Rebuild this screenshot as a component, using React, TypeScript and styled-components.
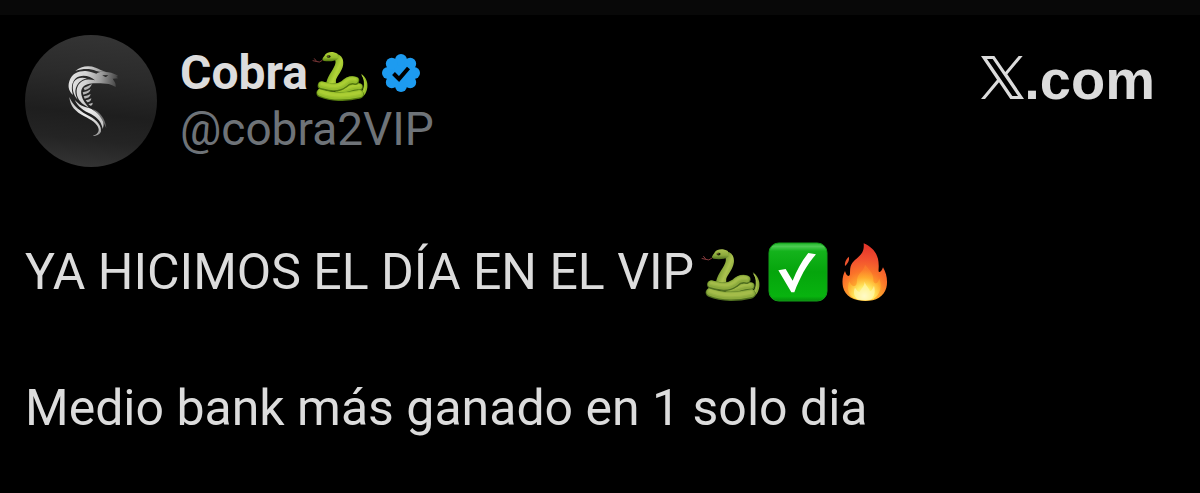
import React, { useId } from 'react';
import styled, { createGlobalStyle } from 'styled-components';

const GlobalStyle = createGlobalStyle`
  body {
    margin: 0;
    background: #000;
    color: #dcdcdc;
    font-family: Roboto, "Liberation Sans", sans-serif;
  }
`;

const TopStrip = styled.div`
  height: 15px;
  background: #080808;
`;

const Post = styled.article`
  padding: 20px 45px 24px 25px;
`;

const Header = styled.header`
  display: flex;
  align-items: flex-start;
`;

const Author = styled.div`
  flex: 1;
  min-width: 0;
  padding: 10px 0 0 23px;
`;

const NameRow = styled.div`
  display: flex;
  align-items: center;
  height: 56px;
`;

const Name = styled.span`
  font-size: 48px;
  line-height: 56px;
  font-weight: 700;
`;

const Handle = styled.a`
  display: block;
  font-size: 46px;
  line-height: 56px;
  color: #6e7378;
  text-decoration: none;
`;

const Brand = styled.a`
  display: flex;
  align-items: baseline;
  margin-top: 14px;
  font-family: "Liberation Sans", Arial, sans-serif;
  font-size: 56px;
  line-height: 62px;
  font-weight: 700;
  color: #dcdcdc;
  text-decoration: none;
`;

const Body = styled.div`
  margin-top: 71px;
`;

const Line = styled.p`
  display: flex;
  align-items: center;
  margin: 0 0 68px;
  font-size: 50px;
  line-height: 68px;

  &:last-child {
    margin-bottom: 0;
  }
`;

const Icon = styled.svg<{ $gap?: number }>`
  flex: none;
  margin-left: ${({ $gap = 0 }) => $gap}px;
`;

const Picture = styled.svg`
  flex: none;
  display: block;
`;

function Avatar() {
  return (
    <Picture width="132" height="132" viewBox="14 14 396 396" role="img" aria-label="Cobra">
      <defs>
        <linearGradient id="disc" x1="0.6" y1="0" x2="0.5" y2="1">
          <stop offset="0" stopColor="#343434" />
          <stop offset="0.3" stopColor="#2b2b2b" />
          <stop offset="0.6" stopColor="#1e1e1e" />
          <stop offset="0.8" stopColor="#242424" />
          <stop offset="1" stopColor="#333" />
        </linearGradient>
        <linearGradient id="steel" gradientUnits="userSpaceOnUse" x1="145" y1="130" x2="296" y2="150">
          <stop offset="0" stopColor="#e4e4e4" />
          <stop offset="0.35" stopColor="#d2d2d2" />
          <stop offset="0.65" stopColor="#9a9a9a" />
          <stop offset="1" stopColor="#3a3a3a" />
        </linearGradient>
        <linearGradient id="tailSteel" gradientUnits="userSpaceOnUse" x1="150" y1="200" x2="250" y2="315">
          <stop offset="0" stopColor="#bdbdbd" />
          <stop offset="0.45" stopColor="#ececec" />
          <stop offset="0.85" stopColor="#c4c4c4" />
          <stop offset="1" stopColor="#555" />
        </linearGradient>
      </defs>
      <circle cx="212" cy="212" r="198" fill="url(#disc)" />
      <g fill="url(#steel)">
        <path d="M165 122C180 108 205 104 226 112C236 116 246 121 258 124C247 125 238 125 228 122C208 114 190 114 165 122Z" />
        <path d="M148 150C154 130 176 121 196 122C210 123 220 128 228 130C238 122 254 124 264 126C276 128 286 132 294 137L288 139L294 144L277 145C280 152 286 156 286 164L286 170C276 164 268 160 258 160C236 160 220 156 202 162C184 168 180 180 184 196C187 210 196 220 206 232C184 222 170 206 169 188C168 172 174 158 188 151C200 145 212 148 224 150C210 136 182 130 165 145C154 156 152 174 158 194C142 180 143 164 148 150Z" />
        <path d="M160 156C168 142 184 140 200 144C182 148 168 160 165 182C165 192 168 200 172 208C158 194 154 172 160 156Z" />
      </g>
      <path d="M246 134Q255 136 264 134L257 140Q250 139 246 134Z" fill="#1d1d1d" />
      <g fill="#b4b4b4">
        <path d="M190 173Q200 169 215 161Q210 175 193 180Z" />
        <path d="M187 186Q199 184 211 177Q208 190 189 193Z" />
        <path d="M190 198Q201 197 211 191Q209 203 193 205Z" />
        <path d="M196 210Q205 209 213 204Q212 215 201 216Z" />
        <path d="M204 221Q211 220 217 217Q217 226 210 226Z" />
      </g>
      <g fill="url(#tailSteel)">
        <path d="M147 200C158 228 182 244 208 258C230 270 244 286 242 304C238 313 228 316 217 317C230 312 236 306 235 296C232 280 212 268 192 258C166 244 149 228 147 200Z" />
        <path d="M163 208C176 224 190 229 206 233C226 240 242 258 249 276C251 286 249 290 247 296C245 278 232 262 212 251C190 241 172 229 163 208Z" />
        <path d="M217 236C238 244 256 266 258 294C248 270 238 254 217 236Z" opacity="0.45" />
      </g>
    </Picture>
  );
}

function Snake({ width, height, bright, gap }: { width: number; height: number; bright?: boolean; gap: number }) {
  const id = useId();
  const light = bright ? '#b3d438' : '#abc24f';
  const mid = bright ? '#94bd2b' : '#8caa3c';
  const dark = bright ? '#54790f' : '#506f20';
  const coils = [
    { d: 'M90 138C116 135 132 122 155 124', w: 24 },
    { d: 'M33 143C66 157 112 157 156 147', w: 28 },
    { d: 'M36 119C60 125 84 132 106 116C118 104 132 101 142 104', w: 26 },
  ];
  return (
    <Icon $gap={gap} width={width} height={height} viewBox="5 -6 178 174" role="img" aria-label="🐍">
      <defs>
        <linearGradient id={`${id}n`} gradientUnits="userSpaceOnUse" x1="58" y1="60" x2="100" y2="78">
          <stop offset="0" stopColor={dark} />
          <stop offset="0.35" stopColor={mid} />
          <stop offset="0.65" stopColor={light} />
          <stop offset="1" stopColor={mid} />
        </linearGradient>
        <linearGradient id={`${id}h`} x1="0" y1="0" x2="0" y2="1">
          <stop offset="0" stopColor={light} />
          <stop offset="0.6" stopColor={mid} />
          <stop offset="1" stopColor={dark} />
        </linearGradient>
      </defs>
      <path d="M38 39Q28 48 20 43L7 40M20 43L12 33" fill="none" stroke="#873b3d" strokeWidth="3" />
      <path d="M161 82C176 92 183 108 181 125C178 147 168 158 148 162L146 148C162 146 169 132 170 117C171 103 167 92 161 82Z" fill={mid} />
      <path d="M165 88C176 103 177 126 168 141" fill="none" stroke={light} strokeWidth="3" strokeLinecap="round" />
      <path d="M72 17C95 18 107 32 104 53C101 74 85 88 81 102L81 124L50 116C51 92 70 74 78 54C82 43 80 36 72 33Z" fill={`url(#${id}n)`} />
      <path d="M38 36C39 30 45 27 47 21C54 11 72 10 86 18L88 34C76 44 56 43 43 41Q38 40 38 36Z" fill={`url(#${id}h)`} />
      {coils.map(({ d, w }) => (
        <g key={d} fill="none" strokeLinecap="round">
          <path d={d} stroke={dark} strokeWidth={w} />
          <path d={d} stroke={mid} strokeWidth={w - 5} transform="translate(0 -2)" />
          <path d={d} stroke={light} strokeWidth={w - 13} opacity="0.4" transform="translate(0 -4)" />
          <path d={d} stroke={light} strokeWidth={w - 19} opacity="0.6" transform="translate(0 -5)" />
        </g>
      ))}
      <ellipse cx="58" cy="27" rx="6" ry="4" fill="#152008" />
      <circle cx="56" cy="26" r="2" fill="#b7833b" />
    </Icon>
  );
}

function Verified() {
  return (
    <Icon $gap={14} width="38" height="38" viewBox="0 0 38 38" role="img" aria-label="Verified account">
      <g fill="#1d9bf0">
        <circle cx="19" cy="19" r="15" />
        {[0, 45, 90, 135, 180, 225, 270, 315].map((angle) => (
          <circle key={angle} cx="19" cy="6" r="6" transform={`rotate(${angle} 19 19)`} />
        ))}
      </g>
      <path d="M11.5 19.5L17 25L26.5 14" fill="none" stroke="#000" strokeWidth="4" />
    </Icon>
  );
}

function CheckMark() {
  return (
    <Icon $gap={8} width="60" height="60" viewBox="0 0 180 180" role="img" aria-label="✅">
      <defs>
        <linearGradient id="tile" x1="0" y1="0" x2="0" y2="1">
          <stop offset="0" stopColor="#22b82a" />
          <stop offset="0.06" stopColor="#4cca52" />
          <stop offset="0.14" stopColor="#14b31c" />
          <stop offset="0.5" stopColor="#05a50c" />
          <stop offset="0.92" stopColor="#08b30f" />
          <stop offset="1" stopColor="#058b0a" />
        </linearGradient>
      </defs>
      <rect x="3" y="3" width="174" height="174" rx="29" fill="url(#tile)" stroke="#149c1a" strokeWidth="3" />
      <path d="M31 85L53 81L74 116C87 84 101 57 121 33L144 37C115 70 96 107 79 151L70 151Z" fill="#fff" />
    </Icon>
  );
}

function Fire() {
  return (
    <Icon $gap={13} width="48" height="60" viewBox="0 0 144 180" role="img" aria-label="🔥">
      <defs>
        <radialGradient id="flame" gradientUnits="userSpaceOnUse" cx="70" cy="160" r="145">
          <stop offset="0" stopColor="#ffe15a" />
          <stop offset="0.25" stopColor="#ffb02e" />
          <stop offset="0.5" stopColor="#fa7429" />
          <stop offset="0.75" stopColor="#f2502f" />
          <stop offset="1" stopColor="#e5382b" />
        </radialGradient>
        <radialGradient id="core" gradientUnits="userSpaceOnUse" cx="70" cy="162" r="80">
          <stop offset="0" stopColor="#fffde0" />
          <stop offset="0.35" stopColor="#ffec62" />
          <stop offset="0.7" stopColor="#ffb02e" stopOpacity="0.8" />
          <stop offset="1" stopColor="#ff8e2e" stopOpacity="0.4" />
        </radialGradient>
      </defs>
      <path d="M68 4C96 16 113 37 113 69C114 79 111 86 114 90C119 92 123 84 126 76C137 94 141 118 136 137C129 163 105 177 73 177C39 177 12 163 6 135C2 115 6 99 12 87C15 96 17 101 23 102C30 101 25 87 29 73C34 55 55 47 64 31C68 24 69 15 68 4Z" fill="url(#flame)" />
      <path d="M23 44C27 55 19 65 12 72C10 62 16 51 23 44Z" fill="#ee542e" />
      <path d="M72 68C84 83 98 93 97 115C97 122 101 125 106 124C112 121 113 115 115 110C124 132 118 158 98 170C78 178 49 176 34 166C19 154 18 134 25 118C30 128 34 134 41 132C50 129 46 116 50 105C55 91 70 84 72 68Z" fill="url(#core)" />
      <path d="M71 119C74 132 85 137 87 148C94 146 96 137 99 131C104 149 101 165 88 173H52C38 163 36 150 42 137C47 143 49 149 56 150C60 139 70 134 71 119Z" fill="#fff9b8" opacity="0.6" />
    </Icon>
  );
}

function XLogo() {
  return (
    <Icon width="43" height="43" viewBox="0 0 129 129" aria-hidden="true">
      <path fill="#dcdcdc" fillRule="evenodd" d="M0 0H40L73 48L113 0H125L79 55L129 129H88L54 79L12 129H0L48 71ZM18 9L94 120H111L35 9Z" />
    </Icon>
  );
}

export default function App() {
  return (
    <>
      <GlobalStyle />
      <TopStrip />
      <Post>
        <Header>
          <Avatar />
          <Author>
            <NameRow>
              <Name>Cobra</Name>
              <Snake bright gap={4} width={56} height={55} />
              <Verified />
            </NameRow>
            <Handle href="#cobra2VIP">@cobra2VIP</Handle>
          </Author>
          <Brand href="#home" aria-label="X.com">
            <XLogo />
            .com
          </Brand>
        </Header>
        <Body>
          <Line>
            YA HICIMOS EL DÍA EN EL VIP
            <Snake gap={7} width={59} height={58} />
            <CheckMark />
            <Fire />
          </Line>
          <Line>Medio bank más ganado en 1 solo dia</Line>
        </Body>
      </Post>
    </>
  );
}
